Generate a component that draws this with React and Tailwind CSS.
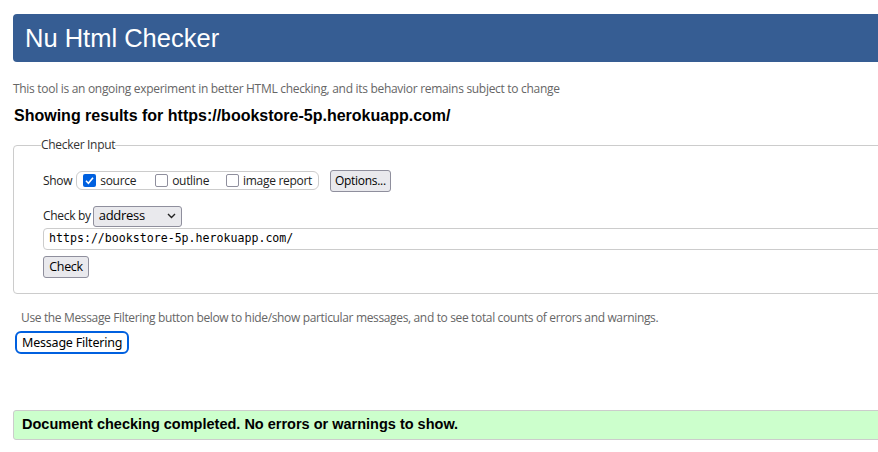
import React from "react";

const ui = { fontFamily: '"Open Sans", "Noto Sans", sans-serif' };
const arial = { fontFamily: '"Liberation Sans", Arial, sans-serif' };
const mono = { fontFamily: '"DejaVu Sans Mono", "Liberation Mono", monospace' };

function Box({ checked, label, className = "" }) {
  return (
    <label className={"flex items-center gap-[4px] " + className}>
      {checked ? (
        <span className="w-[13px] h-[13px] rounded-[2px] bg-[#0060df] flex items-center justify-center">
          <svg width="11" height="11" viewBox="0 0 11 11">
            <path d="M2 5.8 L4.4 8.2 L9 2.8" stroke="white" strokeWidth="1.6" fill="none" />
          </svg>
        </span>
      ) : (
        <span className="w-[13px] h-[13px] rounded-[2px] border border-[#8f8f9d] bg-white" />
      )}
      <span>{label}</span>
    </label>
  );
}

export default function App() {
  return (
    <div className="w-full h-[452px] overflow-hidden bg-white">
      <div className="w-[1000px] pl-[13px] pt-[14px]">
        <div
          className="h-[48px] bg-[#365d93] rounded-[4px] flex items-center pl-[12px] text-white text-[25.5px]"
          style={arial}
        >
          Nu Html Checker
        </div>
        <p className="mt-[19px] text-[12px] text-[#666] leading-[16px] tracking-[-0.3px]" style={ui}>
          This tool is an ongoing experiment in better HTML checking, and its behavior remains subject to change
        </p>
        <h2 className="mt-[9px] ml-[1px] text-[16px] font-bold text-black leading-[20px]" style={arial}>
          Showing results for https://bookstore-5p.herokuapp.com/
        </h2>
        <fieldset
          className="mt-[12px] border border-[#ccc] rounded-[4px] pl-[29px] pt-[17px] pb-[15px] text-[12px] text-[#222] tracking-[-0.3px]"
          style={ui}
        >
          <legend className="-ml-[2px] px-0 text-[12px] text-[#333] leading-[14px]">Checker Input</legend>
          <div className="flex items-center h-[23px]">
            <span className="mr-[4px]">Show</span>
            <div className="flex items-center h-[19px] border border-[#ccc] rounded-[6px] pl-[6px] pr-[6px]">
              <Box checked label="source" />
              <Box label="outline" className="ml-[19px]" />
              <Box label="image report" className="ml-[17px]" />
            </div>
            <button className="ml-[11px] h-[22px] px-[4px] bg-[#e9e9ed] border border-[#8f8f9d] rounded-[3px] text-[12px] text-black">
              Options...
            </button>
          </div>
          <div className="flex items-center mt-[13px] h-[22px]">
            <span className="mr-[2px]">Check by</span>
            <div className="w-[89px] h-[21px] bg-[#e9e9ed] border border-[#8f8f9d] rounded-[3px] flex items-center justify-between pl-[5px] pr-[5px] text-[13px] text-black">
              <span>address</span>
              <svg width="9" height="6" viewBox="0 0 9 6">
                <path d="M1 1 L4.5 4.5 L8 1" stroke="#222" strokeWidth="1.4" fill="none" />
              </svg>
            </div>
          </div>
          <div
            className="mt-[1px] h-[22px] border border-[#ccc] rounded-[4px] flex items-center pl-[5px] text-[11.6px] text-black tracking-normal"
            style={mono}
          >
            https://bookstore-5p.herokuapp.com/
          </div>
          <button className="mt-[6px] w-[46px] h-[22px] bg-[#e9e9ed] border border-[#8f8f9d] rounded-[3px] text-[12.5px] text-black">
            Check
          </button>
        </fieldset>
        <p className="mt-[16px] ml-[8px] text-[12px] text-[#666] leading-[16px] tracking-[-0.35px]" style={ui}>
          Use the Message Filtering button below to hide/show particular messages, and to see total counts of errors and warnings.
        </p>
        <button
          className="mt-[5px] ml-[2px] h-[23px] px-[5px] bg-white border-2 border-[#0060df] rounded-[6px] text-[12.5px] text-black leading-[17px] tracking-[-0.2px]"
          style={{ fontFamily: '"Noto Sans", "Open Sans", sans-serif' }}
        >
          Message Filtering
        </button>
        <div
          className="mt-[56px] h-[30px] bg-[#ccffcc] border border-[#ccc] rounded-[3px] flex items-center pl-[8px] text-[14.5px] font-bold text-black"
          style={arial}
        >
          Document checking completed. No errors or warnings to show.
        </div>
      </div>
    </div>
  );
}
